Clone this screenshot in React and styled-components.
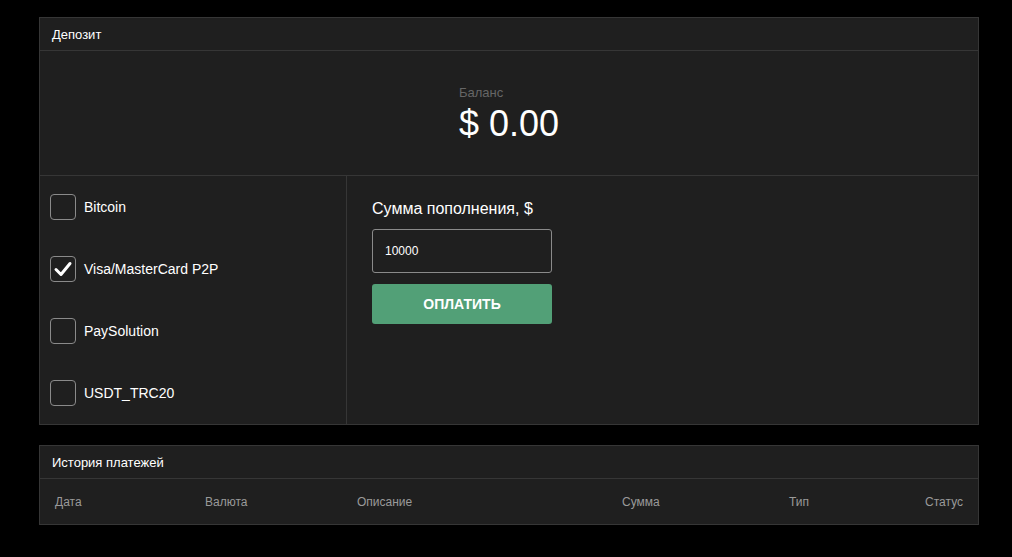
import React from "react";
import styled, { createGlobalStyle } from "styled-components";

const GlobalStyle = createGlobalStyle`
  body {
    margin: 0;
    background: #000;
    font-family: "Liberation Sans", Arial, sans-serif;
    color: #fff;
  }
`;

const Page = styled.div`
  padding: 17px 33px 20px 39px;
  display: flex;
  flex-direction: column;
  gap: 20px;
`;

const Card = styled.div`
  background: #1f1f1f;
  border: 1px solid #363636;
`;

const CardHeader = styled.div`
  height: 32px;
  display: flex;
  align-items: center;
  padding: 0 12px;
  font-size: 13px;
  border-bottom: 1px solid #363636;
`;

const Balance = styled.div`
  display: flex;
  justify-content: center;
  padding: 34px 0 30px;
  border-bottom: 1px solid #363636;
`;

const BalanceLabel = styled.div`
  font-size: 13px;
  color: #666;
  line-height: 15px;
`;

const BalanceValue = styled.div`
  margin-top: 3px;
  font-size: 36px;
  line-height: 42px;
`;

const Body = styled.div`
  display: grid;
  grid-template-columns: 307px 1fr;
`;

const Methods = styled.div`
  display: flex;
  flex-direction: column;
  gap: 36px;
  padding: 18px 10px;
  border-right: 1px solid #363636;
`;

const Method = styled.label`
  display: flex;
  align-items: center;
  gap: 8px;
  font-size: 14px;
  height: 26px;
`;

const Box = styled.span`
  width: 24px;
  height: 24px;
  border: 1px solid #8a8a8a;
  border-radius: 4px;
  display: flex;
  align-items: center;
  justify-content: center;
`;

const Form = styled.div`
  padding: 24px 25px;
  display: flex;
  flex-direction: column;
  width: 180px;
`;

const FormLabel = styled.div`
  font-size: 16px;
  line-height: 18px;
  margin-bottom: 11px;
`;

const Input = styled.div`
  height: 42px;
  border: 1px solid #8a8a8a;
  border-radius: 3px;
  display: flex;
  align-items: center;
  padding: 0 12px;
  font-size: 12px;
`;

const PayButton = styled.button`
  margin-top: 11px;
  height: 40px;
  border: none;
  border-radius: 3px;
  background: #52a077;
  color: #fff;
  font-family: inherit;
  font-weight: bold;
  font-size: 14px;
`;

const TableHead = styled.div`
  display: grid;
  grid-template-columns: 150px 152px 265px 167px 1fr;
  padding: 0 15px 0 15px;
  height: 45px;
  align-items: center;
  font-size: 12px;
  color: #9a9a9a;
`;

const Th = styled.span`
  display: flex;
  justify-content: ${({ split }) => (split ? "space-between" : "flex-start")};
`;

const methods = [
  { name: "Bitcoin" },
  { name: "Visa/MasterCard P2P", checked: true },
  { name: "PaySolution" },
  { name: "USDT_TRC20" },
];

const Check = () => (
  <svg width="20" height="20" viewBox="0 0 20 20">
    <path
      d="M3 10.5 L8 15.5 L17 4.5"
      fill="none"
      stroke="#fff"
      strokeWidth="3"
      strokeLinecap="round"
      strokeLinejoin="round"
    />
  </svg>
);

export default function App() {
  return (
    <>
      <GlobalStyle />
      <Page>
        <Card>
          <CardHeader>Депозит</CardHeader>
          <Balance>
            <div>
              <BalanceLabel>Баланс</BalanceLabel>
              <BalanceValue>$ 0.00</BalanceValue>
            </div>
          </Balance>
          <Body>
            <Methods>
              {methods.map((m) => (
                <Method key={m.name}>
                  <Box>{m.checked && <Check />}</Box>
                  {m.name}
                </Method>
              ))}
            </Methods>
            <Form>
              <FormLabel>Сумма пополнения, $</FormLabel>
              <Input>10000</Input>
              <PayButton>ОПЛАТИТЬ</PayButton>
            </Form>
          </Body>
        </Card>
        <Card>
          <CardHeader>История платежей</CardHeader>
          <TableHead>
            <Th>Дата</Th>
            <Th>Валюта</Th>
            <Th>Описание</Th>
            <Th>Сумма</Th>
            <Th split>
              <span>Тип</span>
              <span>Статус</span>
            </Th>
          </TableHead>
        </Card>
      </Page>
    </>
  );
}
